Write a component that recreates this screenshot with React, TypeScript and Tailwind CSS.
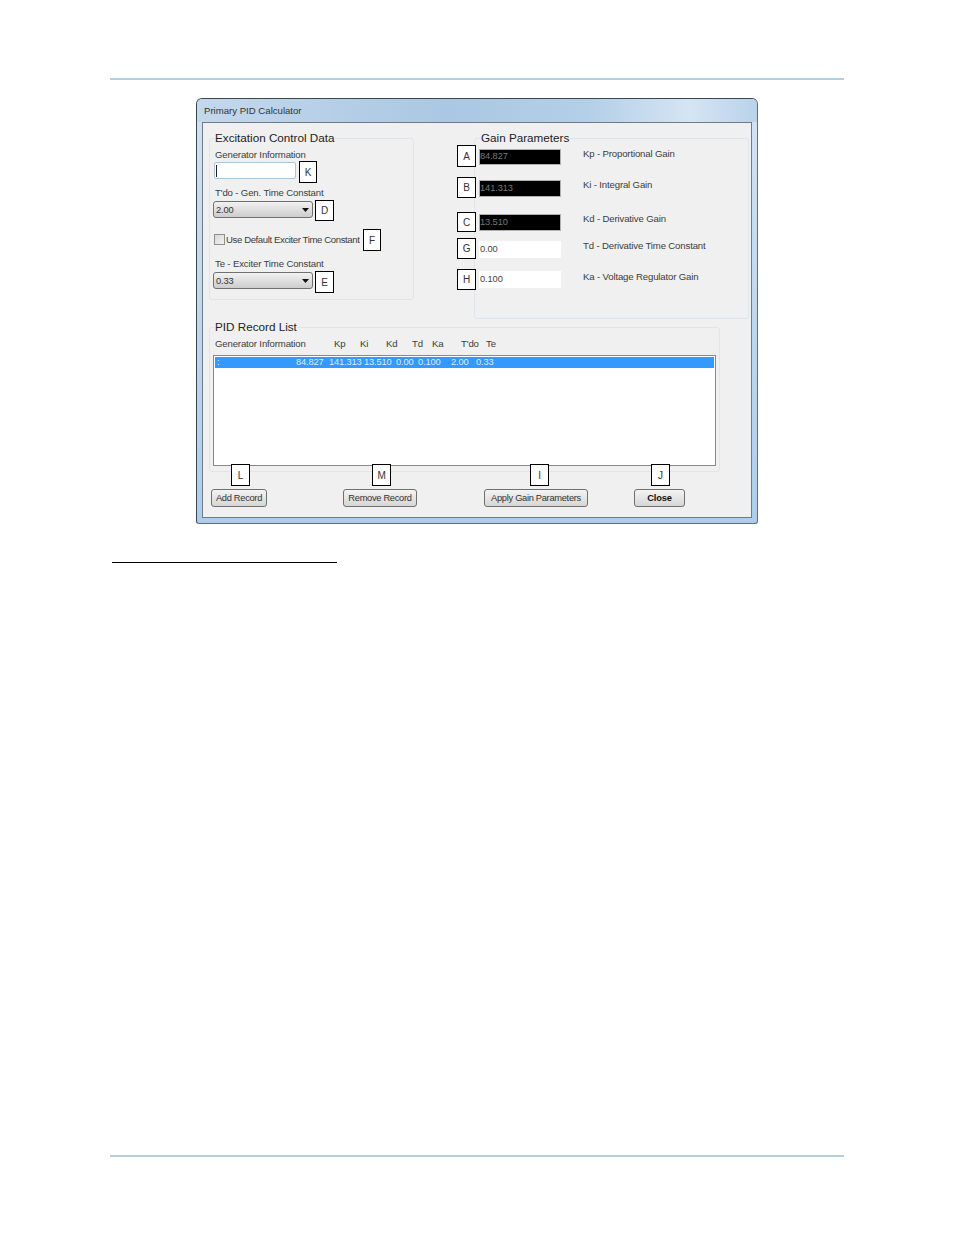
const GROUP = "border border-[#dfe5ea] rounded-[3px]";
const LEGEND = "text-[11.7px] leading-[14px] text-[#222222]";
const LABEL = "text-[9.6px] h-[12px] leading-[12px] text-[#3c3c3c] whitespace-nowrap";

const GAIN_ROWS = [
  { letter: "A", value: "84.827", label: "Kp - Proportional Gain", dark: true, rowMt: "mt-0", boxH: "h-[22px]", inH: "h-[16px]", inMt: "mt-[4px]", lblMt: "mt-[3px]" },
  { letter: "B", value: "141.313", label: "Ki - Integral Gain", dark: true, rowMt: "mt-[10px]", boxH: "h-[21px]", inH: "h-[17px]", inMt: "mt-[3px]", lblMt: "mt-[2px]" },
  { letter: "C", value: "13.510", label: "Kd - Derivative Gain", dark: true, rowMt: "mt-[14px]", boxH: "h-[20px]", inH: "h-[17px]", inMt: "mt-[2px]", lblMt: "mt-[1px]" },
  { letter: "G", value: "0.00", label: "Td - Derivative Time Constant", dark: false, rowMt: "mt-[6px]", boxH: "h-[21px]", inH: "h-[17px]", inMt: "mt-[3px]", lblMt: "mt-[2px]" },
  { letter: "H", value: "0.100", label: "Ka - Voltage Regulator Gain", dark: false, rowMt: "mt-[10px]", boxH: "h-[21px]", inH: "h-[17px]", inMt: "mt-[2px]", lblMt: "mt-[2px]" },
];

const HEADERS = [
  { text: "Generator Information", w: "w-[119px]" },
  { text: "Kp", w: "w-[26px]" },
  { text: "Ki", w: "w-[26px]" },
  { text: "Kd", w: "w-[26px]" },
  { text: "Td", w: "w-[20px]" },
  { text: "Ka", w: "w-[29px]" },
  { text: "T'do", w: "w-[25px]" },
  { text: "Te", w: "w-[20px]" },
];

const RECORD = [
  { text: ":", w: "w-[79px]" },
  { text: "84.827", w: "w-[33px]" },
  { text: "141.313", w: "w-[35px]" },
  { text: "13.510", w: "w-[32px]" },
  { text: "0.00", w: "w-[22px]" },
  { text: "0.100", w: "w-[33px]" },
  { text: "2.00", w: "w-[25px]" },
  { text: "0.33", w: "w-[20px]" },
];

function Callout({ letter, className = "" }: { letter: string; className?: string }) {
  return (
    <div className={`flex items-center justify-center shrink-0 bg-white border border-black text-[10px] text-[#333333] ${className}`}>
      {letter}
    </div>
  );
}

function Dropdown({ value }: { value: string }) {
  return (
    <div className="flex items-center justify-between w-[100px] h-[17px] pl-[2px] pr-[3px] rounded-[3px] border border-[#707070] bg-gradient-to-b from-[#f2f2f2] to-[#cdcdcd] text-[9.3px] leading-[14px] text-[#333333]">
      <span className="pt-px">{value}</span>
      <svg width="7" height="4" viewBox="0 0 7 4"><path d="M0 0h7L3.5 4z" fill="#111111" /></svg>
    </div>
  );
}

function ActionButton({ text, width, left, callout, boxLeft, bold }: { text: string; width: string; left: string; callout: string; boxLeft: string; bold?: boolean }) {
  return (
    <div className={`relative h-[18px] ${width} ${left}`}>
      <div className={`flex items-center justify-center h-full pt-px rounded-[3px] border border-[#707070] bg-gradient-to-b from-[#f4f4f4] to-[#d6d6d6] text-[9.3px] whitespace-nowrap ${bold ? "font-bold text-[#111111]" : "tracking-[-0.3px] text-[#333333]"}`}>
        {text}
      </div>
      <Callout letter={callout} className={`absolute -top-[25px] w-[19px] h-[22px] ${boxLeft}`} />
    </div>
  );
}

export default function App() {
  return (
    <div className="w-[954px] h-[1235px] bg-white flex flex-col px-[110px] pt-[78px] font-['Liberation_Sans',sans-serif] tracking-[-0.15px]">
      <div className="h-[2px] bg-[#b4cde0]" />

      {/* Dialog window */}
      <div className="w-[562px] h-[426px] ml-[86px] mt-[18px] flex flex-col px-[5px] pb-[5px] rounded-t-[6px] rounded-b-[3px] border border-[#3a4650] border-r-[#56718a] border-b-[#56718a] bg-gradient-to-b from-[#d2e2f1] to-[#aecdea]">
        <div className="h-[23px] -mx-[5px] px-[7px] pt-[2px] flex items-center rounded-t-[5px] bg-[linear-gradient(90deg,#c4d8ec_0%,#aac7e3_45%,#b4cfe8_70%,#d5e5f3_88%,#b9d2ea_100%)] text-[9.6px] tracking-normal text-[#333333]">
          Primary PID Calculator
        </div>

        <div className="flex-1 flex flex-col border border-[#6f7c88] bg-[#f0f0f0] pl-[6px]">
          <div className="flex items-start mt-[8px]">
            {/* Excitation Control Data */}
            <fieldset className={`${GROUP} w-[205px] h-[169px] pl-[5px]`}>
              <legend className={`${LEGEND} tracking-normal`}>Excitation Control Data</legend>
              <div className={`${LABEL} mt-[4px]`}>Generator Information</div>
              <div className="flex items-start -ml-px gap-[3px]">
                <div className="w-[82px] h-[17px] mt-px pl-px pt-[2px] bg-white border border-[#a9c6de] rounded-[2px]">
                  <div className="w-px h-[12px] bg-[#222222]" />
                </div>
                <Callout letter="K" className="w-[18px] h-[22px]" />
              </div>
              <div className={`${LABEL} mt-[4px]`}>T'do - Gen. Time Constant</div>
              <div className="flex items-start -ml-[2px] mt-px gap-[2px]">
                <div className="mt-px"><Dropdown value="2.00" /></div>
                <Callout letter="D" className="w-[19px] h-[21px]" />
              </div>
              <div className="flex items-center -ml-px mt-[8px]">
                <div className="w-[11px] h-[11px] -mt-px border border-[#8e8f8f] bg-gradient-to-br from-[#d8d8d8] to-[#f2f2f2]" />
                <span className={`${LABEL} tracking-[-0.4px] ml-px w-[137px]`}>Use Default Exciter Time Constant</span>
                <Callout letter="F" className="w-[18px] h-[22px]" />
              </div>
              <div className={`${LABEL} mt-[7px]`}>Te - Exciter Time Constant</div>
              <div className="flex items-start -ml-[2px] mt-px gap-[2px]">
                <div className="mt-px"><Dropdown value="0.33" /></div>
                <Callout letter="E" className="w-[19px] h-[22px]" />
              </div>
            </fieldset>

            {/* Gain Parameters */}
            <fieldset className={`${GROUP} w-[275px] h-[188px] ml-[60px]`}>
              <legend className={`${LEGEND} tracking-normal ml-[6px]`}>Gain Parameters</legend>
              {GAIN_ROWS.map((row) => (
                <div key={row.letter} className={`flex items-start -ml-[18px] ${row.rowMt}`}>
                  <Callout letter={row.letter} className={`w-[19px] ${row.boxH}`} />
                  <div
                    className={`w-[82px] ml-[3px] flex items-center text-[9.3px] tracking-[-0.1px] ${row.inH} ${row.inMt} ${
                      row.dark ? "bg-black border border-[#b0b0b0] text-[#777777]" : "bg-white pl-px text-[#444444]"
                    }`}
                  >
                    {row.value}
                  </div>
                  <span className={`${LABEL} ml-[22px] ${row.lblMt}`}>{row.label}</span>
                </div>
              ))}
            </fieldset>
          </div>

          {/* PID Record List */}
          <fieldset className={`${GROUP} w-[511px] h-[152px] mt-px pl-[3px]`}>
            <legend className={`${LEGEND} tracking-normal ml-[2px]`}>PID Record List</legend>
            <div className={`${LABEL} flex mt-[4px] ml-[2px]`}>
              {HEADERS.map((h) => (
                <span key={h.text} className={`shrink-0 ${h.w}`}>{h.text}</span>
              ))}
            </div>
            <div className="w-[503px] h-[111px] mt-[5px] border border-[#83898e] bg-white pt-px pl-px">
              <div className="flex items-center h-[11px] bg-[#3399ff] pl-[2px] pr-px mr-px text-[9.3px] text-[#dcebfb] whitespace-nowrap">
                {RECORD.map((c) => (
                  <span key={c.text} className={`shrink-0 ${c.w}`}>{c.text}</span>
                ))}
              </div>
            </div>
          </fieldset>

          <div className="flex mt-[17px]">
            <ActionButton text="Add Record" width="w-[56px]" left="ml-[2px]" callout="L" boxLeft="left-[20px]" />
            <ActionButton text="Remove Record" width="w-[74px]" left="ml-[76px]" callout="M" boxLeft="left-[29px]" />
            <ActionButton text="Apply Gain Parameters" width="w-[104px]" left="ml-[67px]" callout="I" boxLeft="left-[46px]" />
            <ActionButton text="Close" width="w-[51px]" left="ml-[46px]" callout="J" boxLeft="left-[17px]" bold />
          </div>
        </div>
      </div>

      <div className="w-[225px] h-px ml-[2px] mt-[38px] bg-black" />
      <div className="h-[2px] mt-[592px] bg-[#b4cde0]" />
    </div>
  );
}
